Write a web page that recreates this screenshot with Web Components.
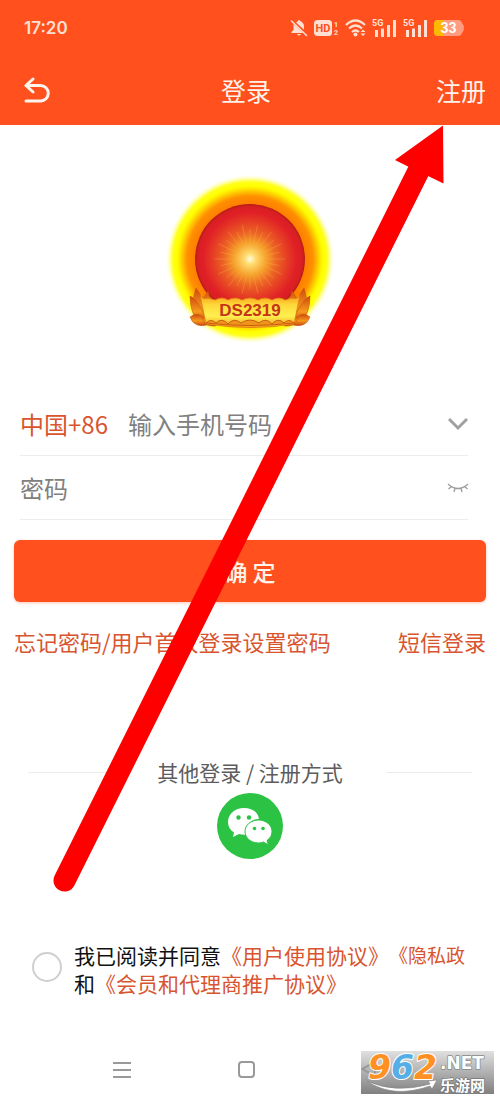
<!DOCTYPE html>
<html lang="zh-CN">
<head>
<meta charset="utf-8">
<meta name="viewport" content="width=device-width, initial-scale=1">
<title>登录</title>
<style>
body { margin: 0; background: #fff; font-family: "Noto Sans CJK SC", sans-serif; }
</style>
</head>
<body>
<login-page></login-page>

<template id="login-page">
<style>
:host { display: block; position: relative; --brand: #ff501e; --link: #d8552f; --line: #ececec; }
main { display: flex; flex-direction: column; }
sun-logo { margin-top: 49px; align-self: center; }
form { display: flex; flex-direction: column; margin-top: 48px; }
.fields { margin: 0 32px 0 20px; }
primary-button { margin: 20px 14px 0; }
.links { display: flex; justify-content: space-between; margin: 22px 14px 0; font-size: 22px; line-height: 34px; }
a { color: var(--link); text-decoration: none; white-space: nowrap; }
other-login { margin: 98px 28px 0; }
agreement-row { margin: 81px 20px 0 32px; }
system-nav { margin-top: 43px; }
</style>
<status-bar></status-bar>
<title-bar><span slot="title">登录</span><a slot="action" href="#register" style="color:inherit">注册</a></title-bar>
<main>
  <sun-logo></sun-logo>
  <form>
    <div class="fields">
      <login-field name="phone" type="tel" hint="输入手机号码"><country-code slot="lead"></country-code><icon-button slot="trail" kind="chevron"></icon-button></login-field>
      <login-field name="password" type="password" hint="密码"><icon-button slot="trail" kind="eye"></icon-button></login-field>
    </div>
    <primary-button>确 定</primary-button>
    <div class="links"><a href="#forgot">忘记密码/用户首次登录设置密码</a><a href="#sms">短信登录</a></div>
  </form>
  <other-login>其他登录 / 注册方式</other-login>
  <agreement-row></agreement-row>
</main>
<system-nav></system-nav>
<pointer-arrow></pointer-arrow>
<site-watermark></site-watermark>
</template>

<template id="status-bar">
<style>
:host { display: flex; align-items: center; justify-content: space-between; height: 56px; padding: 0 35px 0 24px; box-sizing: border-box; background: var(--brand); color: #ffe0d2; font: 600 17px/20px Inter, sans-serif; }
.icons { display: flex; align-items: center; gap: 6px; }
svg { display: block; fill: currentColor; }
text { font-family: Roboto, sans-serif; font-weight: 700; }
</style>
<time>17:20</time>
<div class="icons">
  <svg width="18" height="18" viewBox="0 0 18 18"><path d="M3.500 5 13 14H1.500v-1L3.500 11zM6 3.500C7 2.500 8 2.500 8 1.500q1-1 2 0c0 1 4 1.500 4 6v3.200zM7 15h4q-2 3-4 0z"/><path d="M1 1.500 17 17" stroke="currentColor" stroke-width="1.500"/></svg>
  <svg width="25" height="18" viewBox="0 0 25 18"><rect y="1" width="18" height="16" rx="3.500"/><text x="9" y="13" font-size="11" text-anchor="middle" fill="#ff501e">HD</text><text x="20" y="8" font-size="7">1</text><text x="20" y="16" font-size="7">2</text></svg>
  <svg width="21" height="18" viewBox="0 0 21 18"><g fill="none" stroke="currentColor" stroke-width="2.200"><path d="M1 6q9.500-9 19 0M4 9.500q6.500-6 13 0M7 13q3.500-3 7 0"/></g><circle cx="10.500" cy="15.500" r="2"/><path d="m15.500 13 2.500-2.500 2.500 2.500zM15.500 14.500l2.500 2.500 2.500-2.500z"/></svg>
  <svg width="25" height="18" viewBox="0 0 25 18"><text y="7" font-size="9">5G</text><path d="M3 11h3v7H3zM9 9.500h3V18H9zM15 6h3v12h-3zM21 1h3v17h-3z"/></svg>
  <svg width="25" height="18" viewBox="0 0 25 18"><text y="7" font-size="9">5G</text><path d="M3 11h3v7H3zM9 9.500h3V18H9zM15 6h3v12h-3zM21 1h3v17h-3z"/></svg>
  <svg width="31" height="18" viewBox="0 0 31 18"><rect y="1" width="28" height="16" rx="4" fill="#ff9c80"/><path d="M10 1H4Q0 1 0 5v8q0 4 4 4h6z" fill="#ffb700"/><path d="M28 4q4 5 0 10z" fill="#ff9c80"/><text x="14.500" y="14" font-size="14" text-anchor="middle" fill="#fff">33</text></svg>
</div>
</template>

<template id="title-bar">
<style>
:host { display: grid; grid-template-columns: auto 1fr auto; align-items: center; height: 69px; padding: 0 14px 2px 18px; box-sizing: border-box; background: var(--brand); color: #fff4ec; font-size: 25px; line-height: 36px; }
button { width: 38px; height: 42px; padding: 0; border: 0; background: none; color: inherit; }
svg { display: block; margin: auto; }
.title { text-align: center; }
</style>
<button type="button" aria-label="返回"><svg width="26" height="26" viewBox="0 0 26 26" fill="none" stroke="currentColor" stroke-width="3" stroke-linecap="round" stroke-linejoin="round"><path d="M9 2 2 8.500 9 15M2 8.500h14.500a7.500 7.500 0 0 1 0 15.500H2"/></svg></button>
<div class="title"><slot name="title"></slot></div>
<div><slot name="action"></slot></div>
</template>

<template id="sun-logo">
<style>:host { display: block; } svg { display: block; }</style>
<svg width="170" height="170" viewBox="-85 -85 170 170" role="img" aria-label="DS2319">
<defs>
<radialGradient id="halo"><stop offset=".66" stop-color="#ff8000"/><stop offset=".74" stop-color="#ff9000"/><stop offset=".83" stop-color="#ffe800"/><stop offset=".86" stop-color="#ffff00"/><stop offset=".91" stop-color="#ffff20"/><stop offset=".99" stop-color="#ffffc0" stop-opacity="0"/></radialGradient>
<radialGradient id="disc"><stop offset="0" stop-color="#fffbe0"/><stop offset=".1" stop-color="#ffdc70"/><stop offset=".3" stop-color="#f5a12a"/><stop offset=".48" stop-color="#ec6524"/><stop offset=".68" stop-color="#e63d25"/><stop offset=".85" stop-color="#e02026"/><stop offset=".95" stop-color="#d81f24"/><stop offset="1" stop-color="#b51d14"/></radialGradient>
<linearGradient id="band" x2="0" y2="1"><stop offset="0" stop-color="#f69a17"/><stop offset=".3" stop-color="#ffd83a"/><stop offset=".65" stop-color="#fff04f"/><stop offset="1" stop-color="#f29a17"/></linearGradient>
<linearGradient id="leaf" x2="0" y2="1"><stop offset="0" stop-color="#d1480f"/><stop offset=".55" stop-color="#f59a1b"/><stop offset="1" stop-color="#c73d10"/></linearGradient>
</defs>
<circle r="85" fill="url(#halo)"/>
<circle r="55" fill="url(#disc)"/>
<g id="rays" stroke="#ffb04a" stroke-width=".6" opacity=".6"></g>
<g fill="url(#leaf)" stroke="#c4500f" stroke-width=".5">
<g id="side"><path d="M-47 66C-60 52-57 38-54 29q5 6 6 12l6-9q6 18-2 34z"/><path d="M-49 65q-11-9-11-28 5 2 9 9 6 8 7 19z"/><path d="M-44 66q-12 3-16-8 7-6 14 1l5 7zM-34 67q-12 1-14-8 8-5 14 8z"/></g>
<use href="#side" transform="scale(-1 1)"/>
</g>
<path d="M-50 36q3 5 8 3l7 2q7-4 13 0 7-4 14 0 8-4 16 0 7-4 14 0 7-4 13 0l7-2q5 2 8-3l-6 29q-42 7-88 0z" fill="url(#band)" stroke="#e07a14" stroke-width=".8"/>
<path d="M-44 64q5-5 10 0 6-6 12 1 6-7 13-1 9-6 18 0 7-6 13 1 6-7 12-1 5-5 10 0-44 5-88 0z" fill="#ee961b" stroke="#c34b0b" stroke-width=".8"/>
<text y="57" text-anchor="middle" font-family="Liberation Sans, sans-serif" font-size="17" font-weight="700" fill="#c53519">DS2319</text>
</svg>
</template>

<template id="login-field">
<style>
:host { display: flex; align-items: center; height: 64px; box-sizing: border-box; border-bottom: 1px solid var(--line); }
input { flex: 1; min-width: 0; height: 40px; padding: 0; border: 0; outline: 0; background: none; color: #333; font: inherit; font-size: 24px; line-height: 36px; }
input::placeholder { color: #808080; opacity: 1; }
</style>
<slot name="lead"></slot><input><slot name="trail"></slot>
</template>

<template id="country-code">
<style>
:host { display: block; margin-right: 20px; }
button { padding: 0; border: 0; background: none; color: var(--link); font: inherit; font-size: 24px; line-height: 36px; }
</style>
<button type="button">中国+86</button>
</template>

<template id="icon-button">
<style>
:host { display: block; }
button { display: block; width: 40px; height: 40px; padding: 0; margin-right: -10px; border: 0; background: none; }
svg { display: none; margin: auto; fill: none; }
:host([kind="chevron"]) .chevron, :host([kind="eye"]) .eye { display: block; }
</style>
<button type="button"><svg class="chevron" width="20" height="14" viewBox="0 0 20 14" stroke="#a0a0a0" stroke-width="3"><path d="m1 2 9 9 9-9"/></svg><svg class="eye" width="22" height="12" viewBox="0 0 22 12" stroke="#9c9c9c" stroke-width="1.300"><path d="M1 2q10 9 20 0M4.500 4.500 1.500 7M8 6 7 10M14 6l1 4M17.500 4.500l3 2.500"/></svg></button>
</template>

<template id="primary-button">
<style>
:host { display: block; }
button { display: block; width: 100%; height: 62px; padding: 0; border: 0; border-radius: 6px; background: var(--brand); color: #fff4ec; font: inherit; font-weight: 500; font-size: 23px; line-height: 34px; box-shadow: 0 1px 3px #ff501e55; }
</style>
<button type="submit"><slot></slot></button>
</template>

<template id="other-login">
<style>
:host { display: flex; flex-direction: column; align-items: center; }
.heading { display: flex; align-items: center; gap: 43px; width: 100%; color: #5c5c5c; font-size: 21px; line-height: 32px; white-space: nowrap; }
.heading::before, .heading::after { content: ""; flex: 1; height: 1px; background: var(--line); }
button { display: block; margin-top: 4px; padding: 0; border: 0; background: none; }
svg { display: block; }
</style>
<div class="heading"><slot></slot></div>
<button type="button" aria-label="微信登录"><svg width="68" height="68" viewBox="0 0 68 68"><circle cx="34" cy="34" r="33" fill="#2cc344"/><path d="M28 16c-9 0-16 6-16 14 0 4.500 2 8 6 10.500L17 45l6-3q4 1 8 .5C29 33 35 27 43 27 42 20 36 16 28 16z" fill="#fff"/><path d="M42.500 28C35 28 29 33 29 39.500S35 51 42.500 51q3 0 5-1l5 3-1.500-4.500c3.500-2.500 5-5.500 5-9C56 33 50 28 42.500 28z" fill="#fff" stroke="#2cc344" stroke-width="1"/><g fill="#2cc344"><circle cx="22.500" cy="25.500" r="2.200"/><circle cx="33" cy="25.500" r="2.200"/><circle cx="38.500" cy="36.500" r="1.800"/><circle cx="47" cy="36.500" r="1.800"/></g></svg></button>
</template>

<template id="agreement-row">
<style>
:host { display: flex; align-items: center; gap: 12px; color: #111; font-size: 21px; line-height: 28px; }
input { appearance: none; flex: none; width: 30px; height: 30px; margin: 0 0 4px; border: 2px solid #cfcfcf; border-radius: 50%; }
input:checked { background: var(--brand); }
.line { display: flex; white-space: nowrap; }
a { color: var(--link); text-decoration: none; }
.small { font-size: 19px; }
</style>
<input type="checkbox" id="agree" aria-labelledby="terms">
<div id="terms"><div class="line"><label for="agree">我已阅读并同意</label><a href="#terms">《用户使用协议》</a><a class="small" href="#privacy">《隐私政</a></div><div class="line"><label for="agree">和</label><a href="#agents">《会员和代理商推广协议》</a></div></div>
</template>

<template id="system-nav">
<style>
:host { display: grid; grid-template-columns: repeat(3, 1fr); height: 60px; padding: 0 66px 0 60px; }
button { padding: 0; border: 0; background: none; }
svg { display: block; margin: auto; fill: none; stroke: #999; stroke-width: 2; }
</style>
<button type="button" aria-label="菜单"><svg width="18" height="18" viewBox="0 0 18 18"><path d="M0 2h18M0 9h18M0 16h18"/></svg></button>
<button type="button" aria-label="主页"><svg width="18" height="18" viewBox="0 0 18 18"><rect x="1" y="1" width="15" height="15" rx="3"/></svg></button>
<button type="button" aria-label="后退"><svg width="18" height="18" viewBox="0 0 18 18"><path d="M15 2 2 9l13 7z"/></svg></button>
</template>

<template id="pointer-arrow">
<style>:host { position: absolute; inset: 0; pointer-events: none; } svg { display: block; width: 100%; height: auto; }</style>
<svg viewBox="0 0 500 1100" aria-hidden="true"><path d="M64.500 880.500 420 168" stroke="#f00" stroke-width="22" stroke-linecap="round"/><path d="M443 125.500 395 160 409 167 428 176 443.500 183.500z" fill="#f00"/></svg>
</template>

<template id="site-watermark">
<style>:host { position: absolute; right: 6px; bottom: 6px; pointer-events: none; } svg { display: block; }</style>
<svg width="133" height="57" viewBox="0 -14 133 57">
<defs><linearGradient id="shade" x2="0" y2="1"><stop offset="0" stop-color="#e0e0e0"/><stop offset="1" stop-color="#808080"/></linearGradient></defs>
<rect width="133" height="43" fill="url(#shade)"/>
<path d="M14 11 1 18l13 7z" fill="none" stroke="#9a9a9a" stroke-width="2"/>
<path d="M6 30Q34 43 69 33l-2-3 9-1-5 9-2-3Q32 48 6 30z" fill="#fff" stroke="#888" stroke-width=".7"/>
<g font-family="DejaVu Sans, sans-serif" font-weight="700" paint-order="stroke" stroke-linejoin="round">
<text x="7" y="28" font-size="33" font-style="italic" stroke="#fff" stroke-width="2" fill="#ff9124">9<tspan fill="#55aee6">6</tspan>2</text>
<text x="79" y="18" font-size="17" fill="#fff" stroke="#888" stroke-width="1.500">.NET</text>
<text x="79" y="40" font-family="Noto Sans CJK SC, sans-serif" font-size="15" fill="#fff" stroke="#777" stroke-width="1.500">乐游网</text>
</g>
</svg>
</template>

<script>
class TemplateElement extends HTMLElement {
  constructor() {
    super();
    const source = document.getElementById(this.localName);
    this.attachShadow({ mode: "open" }).append(source.content.cloneNode(true));
  }
}

class SunLogo extends TemplateElement {
  connectedCallback() {
    const rays = this.shadowRoot.getElementById("rays");
    for (let i = 0; i < 28; i++) {
      const ray = document.createElementNS("http://www.w3.org/2000/svg", "line");
      const angle = i * Math.PI / 14;
      const reach = i % 2 ? 30 : 35;
      ray.setAttribute("x1", 12 * Math.cos(angle));
      ray.setAttribute("y1", 12 * Math.sin(angle));
      ray.setAttribute("x2", reach * Math.cos(angle));
      ray.setAttribute("y2", reach * Math.sin(angle));
      rays.append(ray);
    }
  }
}

class LoginField extends TemplateElement {
  connectedCallback() {
    const input = this.shadowRoot.querySelector("input");
    input.type = this.getAttribute("type");
    input.name = this.getAttribute("name");
    input.placeholder = this.getAttribute("hint");
    input.setAttribute("aria-label", this.getAttribute("hint"));
  }
}

class IconButton extends TemplateElement {
  connectedCallback() {
    const label = this.getAttribute("kind") === "eye" ? "显示密码" : "选择地区";
    this.shadowRoot.querySelector("button").setAttribute("aria-label", label);
  }
}

customElements.define("sun-logo", SunLogo);
customElements.define("login-field", LoginField);
customElements.define("icon-button", IconButton);
for (const name of ["status-bar", "title-bar", "country-code", "primary-button", "other-login", "agreement-row", "system-nav", "pointer-arrow", "site-watermark", "login-page"]) {
  customElements.define(name, class extends TemplateElement {});
}
</script>
</body>
</html>
